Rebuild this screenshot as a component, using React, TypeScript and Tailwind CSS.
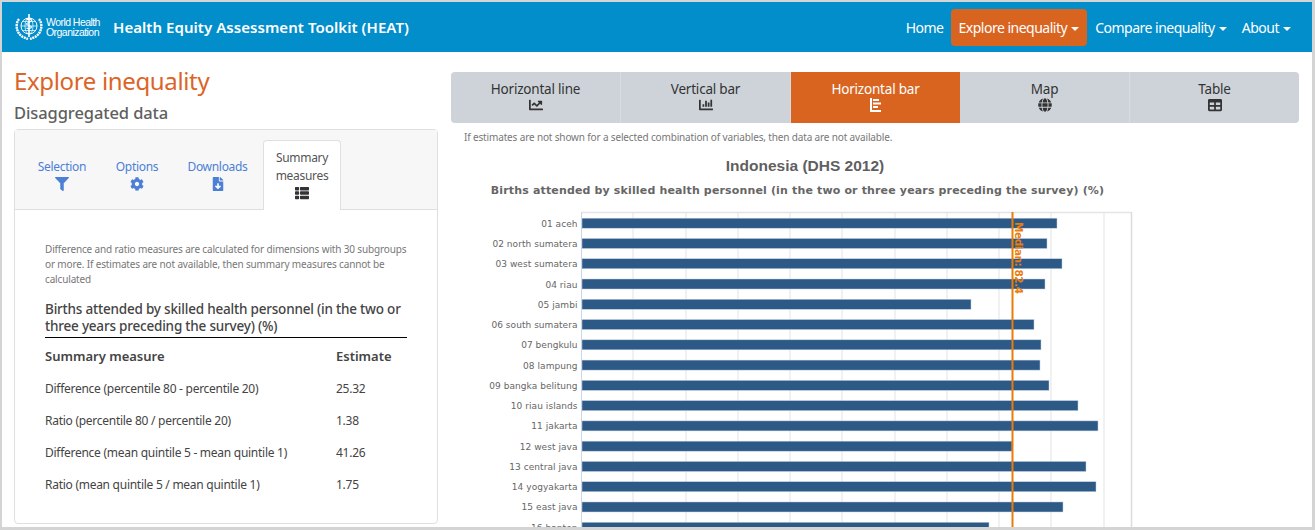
import { FaFilter, FaCog, FaFileDownload, FaThList, FaChartLine, FaChartBar, FaGlobe, FaTable } from 'react-icons/fa';

const chartTabs = [
  { label: 'Horizontal line', icon: <FaChartLine size={14} /> },
  { label: 'Vertical bar', icon: <FaChartBar size={14} /> },
  { label: 'Horizontal bar', icon: <HorizontalBarIcon />, active: true },
  { label: 'Map', icon: <FaGlobe size={14} /> },
  { label: 'Table', icon: <FaTable size={14} /> },
];

const sideTabs = [
  { label: 'Selection', icon: <FaFilter size={14} />, width: 'w-[76px]' },
  { label: 'Options', icon: <FaCog size={14} />, width: 'w-[74px]' },
  { label: 'Downloads', icon: <FaFileDownload size={14} />, width: 'w-[87px]' },
];

const measures = [
  ['Difference (percentile 80 - percentile 20)', '25.32'],
  ['Ratio (percentile 80 / percentile 20)', '1.38'],
  ['Difference (mean quintile 5 - mean quintile 1)', '41.26'],
  ['Ratio (mean quintile 5 / mean quintile 1)', '1.75'],
];

const regions: [string, number][] = [
  ['01 aceh', 1057],
  ['02 north sumatera', 1047],
  ['03 west sumatera', 1062],
  ['04 riau', 1045],
  ['05 jambi', 971],
  ['06 south sumatera', 1034],
  ['07 bengkulu', 1041],
  ['08 lampung', 1040],
  ['09 bangka belitung', 1049],
  ['10 riau islands', 1078],
  ['11 jakarta', 1098],
  ['12 west java', 1012],
  ['13 central java', 1086],
  ['14 yogyakarta', 1096],
  ['15 east java', 1063],
  ['16 banten', 989],
];

const gridLines = [633, 686, 738, 790, 842, 895, 947, 999, 1051, 1104];

function HorizontalBarIcon() {
  return (
    <svg width="11" height="14" viewBox="0 0 11 14" fill="currentColor">
      <path d="M0 0h2v12h9v2H0z" />
      <path d="M3 1h6v2H3zM3 4.500h8v2H3zM3 8h5v2H3z" />
    </svg>
  );
}

function WhoLogo() {
  return (
    <svg width="30" height="26" viewBox="0 0 30 26" fill="none" stroke="white" className="shrink-0">
      <circle cx="15" cy="12" r="8" strokeWidth="1" />
      <ellipse cx="15" cy="12" rx="4" ry="8" strokeWidth="0.7" />
      <path d="M7 12h16M8.500 7.500h13M8.500 16.500h13" strokeWidth="0.7" />
      <path d="M15 0v23" strokeWidth="1.600" />
      <path d="M12.500 6c2-1.500 4.500-1 5 .5s-5 2-5 3.500 5 1.500 5 3-3.500 2-5 1" strokeWidth="1.200" />
      <path d="M5 5C1 10 2 19 9 23l5 2M25 5c4 5 3 14-4 18l-5 2" strokeWidth="2.400" strokeDasharray="2 0.700" />
    </svg>
  );
}

function Caret() {
  return <span className="ml-[4px] inline-block h-0 w-0 border-x-[4px] border-t-[4px] border-x-transparent border-t-white align-[2px]" />;
}

function Chart() {
  return (
    <svg width="700" height="318" viewBox="480 210 700 318" className="block">
      {gridLines.map((x) => (
        <line key={x} x1={x} x2={x} y1="212" y2="528" stroke="#ececec" strokeWidth="1.500" />
      ))}
      <line x1="582" x2="1131.500" y1="212.500" y2="212.500" stroke="#e4e4e4" strokeWidth="1.500" />
      <line x1="1131.500" x2="1131.500" y1="212" y2="528" stroke="#dcdcdc" strokeWidth="1.500" />
      <line x1="581.500" x2="581.500" y1="212" y2="528" stroke="#ccd6eb" strokeWidth="1" />
      {regions.map(([name, end], i) => {
        const y = 218.200 + i * 20.270;
        return (
          <g key={name}>
            <text
              x="577.500"
              y={y + 8.500}
              textAnchor="end"
              fontSize="9"
              fill="#666666"
              letterSpacing="0.050"
              fontFamily="'DejaVu Sans', sans-serif"
            >
              {name}
            </text>
            <rect x="582" y={y} width={end - 582} height="10" fill="#2c5985" stroke="#c4d0e2" strokeWidth="0.500" />
          </g>
        );
      })}
      <line x1="1012.500" x2="1012.500" y1="212" y2="528" stroke="#e87d0d" strokeWidth="2" />
      <text
        transform="translate(1014.500 222) rotate(90)"
        fontSize="10.500"
        fontWeight="700"
        fill="#e87d0d"
        letterSpacing="-0.450"
        fontFamily="'DejaVu Sans', sans-serif"
      >
        Median: 82.4
      </text>
    </svg>
  );
}

export default function App() {
  return (
    <div className="h-[530px] w-[1315px] overflow-hidden border-t-2 border-r-[3px] border-b-[3px] border-l-2 border-[#d4d4d4] bg-white font-['Noto_Sans','Open_Sans',sans-serif] text-[#555]">
      <header className="flex h-[50px] items-center justify-between bg-[#028dcb] pl-3 pr-[13px] text-white">
        <div className="flex items-center">
          <WhoLogo />
          <div className="ml-[2px] w-[58px] font-['Liberation_Sans',sans-serif] text-[10.500px] leading-[10px] tracking-[-0.550px]">
            World Health<br />Organization
          </div>
          <div className="ml-[9px] text-[15px] font-semibold tracking-[0.050px]">Health Equity Assessment Toolkit (HEAT)</div>
        </div>
        <nav className="flex items-center text-[14px] tracking-[-0.500px]">
          <a className="py-2 pl-2 pr-[7px]">Home</a>
          <a className="rounded bg-[#d86420] px-2 py-[8px]">Explore inequality<Caret /></a>
          <a className="py-2 pl-2 pr-[7px]">Compare inequality<Caret /></a>
          <a className="px-2 py-2">About<Caret /></a>
        </nav>
      </header>

      <div className="flex">
        <aside className="ml-3 w-[424px] shrink-0">
          <h1 className="mt-[12px] text-[24px] leading-[34px] tracking-[-0.350px] text-[#dc6427]">Explore inequality</h1>
          <h2 className="mt-[3px] text-[16.500px] font-medium leading-[24px] tracking-[-0.100px] text-[#5f5f5f]">Disaggregated data</h2>
          <div className="mt-[4px] rounded border border-[#dfdfdf]">
            <div className="flex h-[80px] items-end border-b border-[#dfdfdf] bg-[#f7f7f7] pl-[9px]">
              {sideTabs.map((tab) => (
                <a key={tab.label} className={`mb-[18px] flex flex-col items-center text-[12px] leading-[16px] tracking-[-0.300px] text-[#4c7fd6] ${tab.width}`}>
                  {tab.label}
                  <span className="mt-[2px]">{tab.icon}</span>
                </a>
              ))}
              <a className="relative top-px ml-[2px] flex h-[70px] w-[78px] flex-col items-center rounded-t border border-b-0 border-[#dfdfdf] bg-white pt-[8px] text-center text-[12px] leading-[18px] tracking-[-0.300px] text-[#555]">
                Summary measures
                <FaThList size={14} className="mt-[1px] text-[#333]" />
              </a>
            </div>
            <div className="h-[313px] px-[30px] pt-[32px]">
              <p className="text-[10px] leading-[15px] tracking-[-0.150px] text-[#777]">
                Difference and ratio measures are calculated for dimensions with 30 subgroups or more. If estimates are not available, then summary measures cannot be calculated
              </p>
              <h3 className="mt-[14px] border-b border-black pb-[2px] text-[13.500px] font-medium leading-[17px] tracking-[-0.200px] text-[#444]">
                Births attended by skilled health personnel (in the two or three years preceding the survey) (%)
              </h3>
              <div className="mt-[9px] flex text-[13px] font-semibold leading-[18px] text-[#444]">
                <div className="w-[291px]">Summary measure</div>
                <div>Estimate</div>
              </div>
              <div className="mt-[8px]">
                {measures.map(([name, value]) => (
                  <div key={name} className="flex h-[32px] items-center text-[12px] tracking-[-0.270px] text-[#444]">
                    <div className="w-[291px]">{name}</div>
                    <div>{value}</div>
                  </div>
                ))}
              </div>
            </div>
          </div>
        </aside>

        <main className="ml-[13px] w-[848px] shrink-0">
          <div className="mt-5 flex h-[51px] overflow-hidden rounded bg-[#ced3da]">
            {chartTabs.map((tab) => (
              <div
                key={tab.label}
                className={`flex flex-1 flex-col items-center pt-[8px] text-[13.500px] leading-[18px] tracking-[-0.200px] ${tab.active ? 'bg-[#d86420] text-white' : 'border-r border-[#d8dce2] text-[#333] last:border-r-0'}`}
              >
                {tab.label}
                {tab.icon}
              </div>
            ))}
          </div>
          <p className="ml-[13px] mt-[6px] text-[10px] leading-[16px] tracking-[-0.150px] text-[#777]">
            If estimates are not shown for a selected combination of variables, then data are not available.
          </p>
          <div className="mt-[12px] w-[708px] text-center font-['Liberation_Sans',sans-serif] text-[15.500px] font-bold leading-[18px] text-[#5f5f5f]">
            Indonesia (DHS 2012)
          </div>
          <div className="mt-[8px] w-[693px] text-center font-['DejaVu_Sans',sans-serif] text-[11px] font-bold leading-[16px] tracking-[0.150px] text-[#666]">
            Births attended by skilled health personnel (in the two or three years preceding the survey) (%)
          </div>
          <div className="ml-[29px] mt-[11px]">
            <Chart />
          </div>
        </main>
      </div>
    </div>
  );
}
